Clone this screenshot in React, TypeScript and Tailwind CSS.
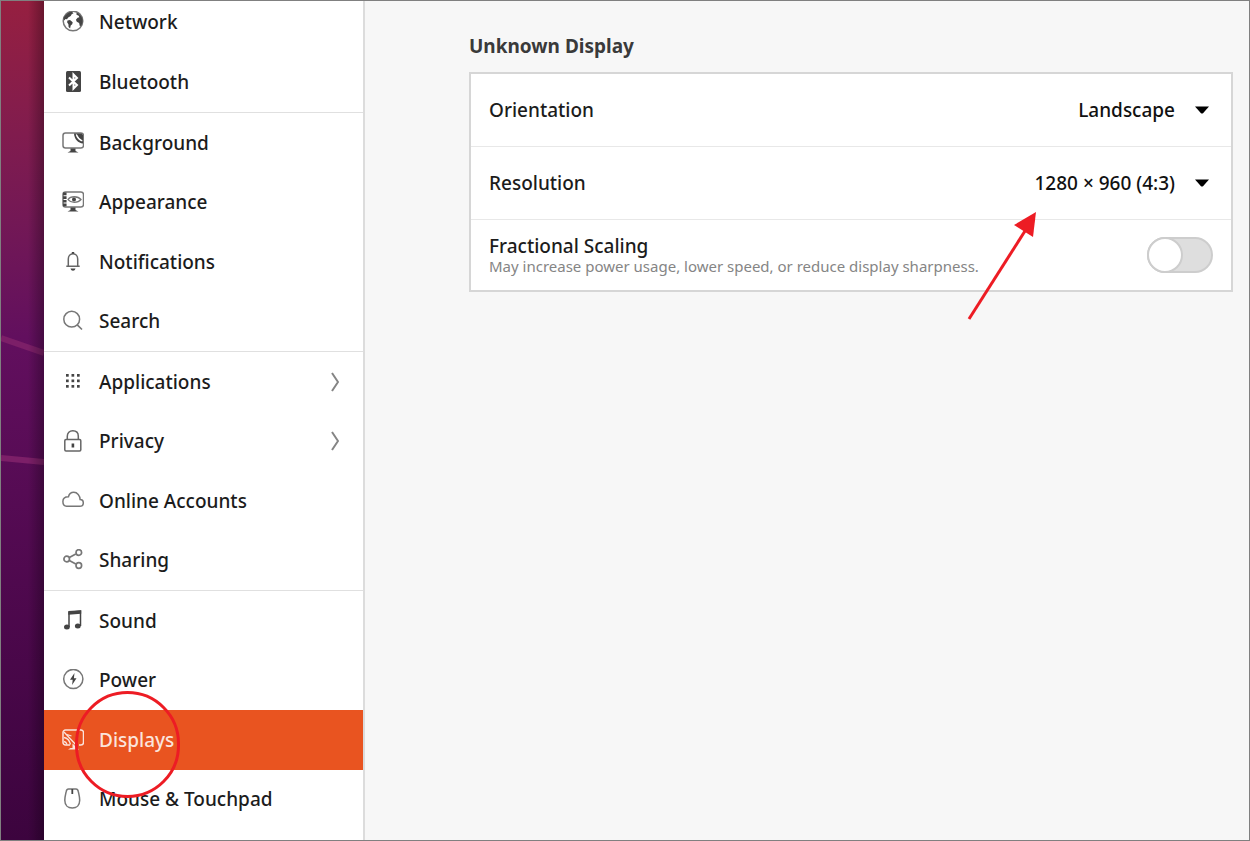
import React, { useState } from "react";

interface NavItem {
  name: string;
  icon: React.ReactNode;
  submenu?: boolean;
}

const Icon = ({ children }: { children: React.ReactNode }) => (
  <svg
    viewBox="0 0 22 22"
    className="size-[22px] shrink-0"
    fill="none"
    stroke="currentColor"
    strokeWidth="1.5"
    aria-hidden="true"
  >
    {children}
  </svg>
);

const groups: NavItem[][] = [
  [
    {
      name: "Network",
      icon: (
        <Icon>
          <circle cx="11" cy="10" r="9.8" strokeWidth="1.5" stroke="#777" />
          <path
            d="M1.500 7.500C3 3.500 6.500 1 10 .8l1.500 1.500-1.800 1-1 1.700-2.500 1.500L5 8.300 3.500 8l-1.300 1.500z"
            fill="currentColor"
            stroke="none"
          />
          <path
            d="M5.500 9.500l2.500-.4 2.700 2.100-.5 2-1.500 1.400-.6 3-1.500-1.500-.2-2.900-1.300-1.900z"
            fill="currentColor"
            stroke="none"
          />
          <path
            d="M14.500 1.500c3 1 5.400 3.700 6.100 7l-.1 3.200-1.200 3-1.500.3-.7-3-2.300-1.200-.9-2 1.700-2.100 1.700-.4-.6-1.600-2.200-.9z"
            fill="currentColor"
            stroke="none"
          />
        </Icon>
      ),
    },
    {
      name: "Bluetooth",
      icon: (
        <Icon>
          <rect x="4" y="0" width="15" height="21" rx="1.500" fill="currentColor" stroke="none" />
          <path d="M7 6.500l8 7.500-3.500 3.500v-14L15 7l-8 7.500" stroke="white" strokeWidth="2" />
        </Icon>
      ),
    },
  ],
  [
    {
      name: "Background",
      icon: (
        <Icon>
          <rect x="1" y="1" width="20.500" height="15" rx="2.500" stroke="#777" />
          <path d="M12 1.500h7.500L21 3v8.500c-5-.5-8.500-4-9-10z" fill="currentColor" stroke="none" />
          <path d="M14.300 2.500c1 3.500 2.500 5.300 6 6.500-1.800-1-4.500-3-6-6.500z" fill="white" stroke="white" strokeWidth="1.200" />
          <path d="M8.500 16.500h5v2.500l3 1.500H5.500l3-1.500z" fill="currentColor" stroke="none" />
        </Icon>
      ),
    },
    {
      name: "Appearance",
      icon: (
        <Icon>
          <rect x="1" y="1" width="20.500" height="15" rx="2.500" stroke="#777" />
          <path d="M2.800 1.500v14.500" strokeWidth="3.500" strokeDasharray="2.700 1" />
          <path d="M6 8.500C8.500 4.800 16 4.800 19 8.500c-3 3.700-10.500 3.700-13 0z" strokeWidth="1.300" stroke="#777" />
          <circle cx="12" cy="8.500" r="2" fill="currentColor" stroke="none" />
          <path d="M8.500 16.500h5v2.500l3 1.500H5.500l3-1.500z" fill="currentColor" stroke="none" />
        </Icon>
      ),
    },
    {
      name: "Notifications",
      icon: (
        <Icon>
          <path d="M6.300 14.500V8c0-3 2-5.300 4.700-5.300s4.700 2.300 4.700 5.300v6.500M4.300 15.300h13.400" stroke="#666" />
          <path d="M9.800 1h2.400v1.800H9.800zM8.500 17.500h5c-.5 1.700-1.300 2.200-2.500 2.200s-2-.5-2.500-2.200z" fill="currentColor" stroke="none" />
        </Icon>
      ),
    },
    {
      name: "Search",
      icon: (
        <Icon>
          <circle cx="9.700" cy="9.200" r="7.900" stroke="#777" />
          <path d="M15 14.700l5 4.800" strokeWidth="1.700" stroke="#777" />
        </Icon>
      ),
    },
  ],
  [
    {
      name: "Applications",
      icon: (
        <Icon>
          {[3, 8.5, 14].map((y) =>
            [4, 9.5, 15].map((x) => (
              <rect key={`${x}-${y}`} x={x} y={y} width="2.700" height="2.700" fill="currentColor" stroke="none" />
            ))
          )}
        </Icon>
      ),
      submenu: true,
    },
    {
      name: "Privacy",
      icon: (
        <Icon>
          <rect x="2.800" y="9.500" width="16" height="11.500" rx="1.200" stroke="#666" />
          <path d="M5.300 9.500V6.200C5.300 3 7.500.8 10.800.8s5.500 2.200 5.500 5.400v3.300" stroke="#666" />
          <rect x="9.600" y="13.500" width="2.600" height="4" fill="currentColor" stroke="none" />
        </Icon>
      ),
      submenu: true,
    },
    {
      name: "Online Accounts",
      icon: (
        <Icon>
          <path
            d="M4.600 16.200h13.200c2.200 0 3.500-1.400 3.500-3.300 0-2-1.500-3.300-3.200-3.300C18 5.500 15.300 2.300 11.800 2.300c-2.700 0-4.700 1.700-5.300 4.400-3 0-5.600 1.600-5.600 4.800 0 2.900 1.500 4.700 3.700 4.700z"
            stroke="#777"
          />
        </Icon>
      ),
    },
    {
      name: "Sharing",
      icon: (
        <Icon>
          <g stroke="#777" strokeWidth="1.700">
            <circle cx="4.700" cy="10" r="2.800" />
            <circle cx="16.800" cy="3.500" r="2.800" />
            <circle cx="16.800" cy="16.500" r="2.800" />
            <path d="M7.300 8.600l6.500-3.500M7.300 11.400l6.500 3.500" />
          </g>
        </Icon>
      ),
    },
  ],
  [
    {
      name: "Sound",
      icon: (
        <Icon>
          <path d="M7 17V2.500L18.500 1v15" strokeWidth="1.500" />
          <path d="M6.300 1L19.200.2v3.600L6.300 4.800z" fill="currentColor" stroke="none" />
          <ellipse cx="4.900" cy="17" rx="2.900" ry="2.500" fill="currentColor" stroke="none" />
          <ellipse cx="15.800" cy="16" rx="2.900" ry="2.500" fill="currentColor" stroke="none" />
        </Icon>
      ),
    },
    {
      name: "Power",
      icon: (
        <Icon>
          <circle cx="11.300" cy="10" r="9.600" stroke="#777" />
          <path d="M12.500 4L8 10.800h2.700l-.6 5.200 4.400-6.800h-2.600z" fill="currentColor" stroke="none" />
        </Icon>
      ),
    },
    {
      name: "Displays",
      icon: (
        <Icon>
          <path d="M8 16H3.500A2.500 2.500 0 0 1 1 13.500v-10A2.500 2.500 0 0 1 3.500 1H19a2.500 2.500 0 0 1 2.500 2.500v10A2.500 2.500 0 0 1 19 16h-2" />
          <path d="M2 3l12.500 13.500M2 8.500c3 .4 5.500 2.700 6.500 7M2 12.500c1.500.2 2.500 1.200 3 3M5 5.500l4.500 1.500" strokeWidth="1.300" />
          <path d="M10.500 14.500l6.500 6H6L8.500 19h2z" fill="currentColor" stroke="none" />
        </Icon>
      ),
    },
    {
      name: "Mouse & Touchpad",
      icon: (
        <Icon>
          <path
            d="M6.500 1h7.500c1.500 0 2 1 2.300 2.500.7 3 1.400 5.500 1.400 8.700 0 4.700-3 7.800-7.400 7.800s-7.500-3.100-7.500-7.800c0-3.200.7-5.700 1.400-8.700C4.500 2 5 1 6.500 1z"
            stroke="#777"
          />
          <path d="M10.300 1v5" strokeWidth="1.800" />
        </Icon>
      ),
    },
  ],
];

const Wallpaper = () => (
  <div className="relative w-[43px] shrink-0 bg-linear-to-b from-[#961f40] via-[#620f5e] via-40% to-[#3c043e]">
    <svg viewBox="0 0 43 839" className="absolute inset-x-0 top-0 w-full" aria-hidden="true">
      <path d="M0 337L43 352M0 457L43 461" stroke="#7c1f68" strokeWidth="6" />
    </svg>
    <div className="absolute inset-y-0 right-0 w-4 bg-linear-to-r from-transparent to-black/30" />
  </div>
);

const Sidebar = () => {
  const [selected, setSelected] = useState("Displays");

  return (
    <nav className="w-[321px] shrink-0 border-r-2 border-[#dcdcdc] bg-white">
      {groups.map((items, index) => (
        <ul
          key={index}
          className={
            index === 0
              ? "flex h-[112px] flex-col justify-end border-b border-[#e0e0e0]"
              : "grid h-[239px] grid-rows-4 border-b border-[#e0e0e0] last:border-white"
          }
        >
          {items.map((item) => (
            <li key={item.name} className={index === 0 ? "relative h-[60px] shrink-0" : "relative"}>
              <a
                href="#"
                onClick={() => setSelected(item.name)}
                className={`flex h-full items-center gap-[15px] pr-6 pl-[18px] ${
                  selected === item.name ? "bg-[#e95420] text-[#fbe4dc]" : "text-[#444]"
                }`}
              >
                {item.icon}
                <span
                  className={`flex-1 text-[19px] font-medium whitespace-nowrap ${
                    selected === item.name ? "" : "text-[#1c1c1c]"
                  }`}
                >
                  {item.name}
                </span>
                {item.submenu && (
                  <svg viewBox="0 0 8 20" className="h-5 w-2" fill="none" stroke="#858585" strokeWidth="2" aria-hidden="true">
                    <path d="M1 1l6 9-6 9" />
                  </svg>
                )}
              </a>
              {/* Red ring around the Displays entry */}
              {item.name === "Displays" && (
                <div className="pointer-events-none absolute -top-[19px] left-[31px] z-10 h-[107px] w-[105px] rounded-full border-3 border-[#ed1c24]" />
              )}
            </li>
          ))}
        </ul>
      ))}
    </nav>
  );
};

const SelectRow = ({ id, label, options }: { id: string; label: string; options: string[] }) => (
  <div className="flex h-[73px] items-center justify-between border-b border-[#e8e8e8] pr-[22px] pl-[18px]">
    <label htmlFor={id}>{label}</label>
    <div className="relative flex items-center">
      <select id={id} className="appearance-none bg-transparent pr-[34px] text-[#111] [field-sizing:content]">
        {options.map((option) => (
          <option key={option}>{option}</option>
        ))}
      </select>
      <svg viewBox="0 0 14 8" className="pointer-events-none absolute right-0 h-2 w-[14px]" aria-hidden="true">
        <path d="M0 .5h14L8 7.200Q7 8 6 7.200z" fill="#000" />
      </svg>
    </div>
  </div>
);

const DisplayPanel = () => {
  const [scaling, setScaling] = useState(false);

  return (
    <main className="min-w-0 flex-1 bg-[#f7f7f7] pt-[31px] pr-4 pl-[104px]">
      <h1 className="text-[19px] leading-7 font-bold text-[#3a3a3a]">Unknown Display</h1>
      <section className="relative mt-3 border-2 border-[#d6d6d6] bg-white text-[19px] font-medium text-[#1c1c1c]">
        <SelectRow id="orientation" label="Orientation" options={["Landscape"]} />
        <SelectRow id="resolution" label="Resolution" options={["1280 × 960 (4:3)"]} />
        <div className="flex h-[70px] items-center justify-between px-[18px]">
          <div>
            <label htmlFor="scaling" className="block leading-[22px]">
              Fractional Scaling
            </label>
            <p id="scaling-hint" className="text-[15px] leading-[18px] font-normal text-[#858585]">
              May increase power usage, lower speed, or reduce display sharpness.
            </p>
          </div>
          <span className="relative h-9 w-[66px] shrink-0">
            <input
              id="scaling"
              type="checkbox"
              role="switch"
              aria-describedby="scaling-hint"
              checked={scaling}
              onChange={() => setScaling(!scaling)}
              className="peer block h-full w-full appearance-none rounded-full border-2 border-[#cdcdcd] bg-[#dedede] checked:bg-[#e95420]"
            />
            <span className="pointer-events-none absolute top-0 left-0 size-9 rounded-full border-2 border-[#cdcdcd] bg-white peer-checked:left-[30px]" />
          </span>
        </div>
        {/* Arrow pointing at the resolution */}
        <svg
          viewBox="0 0 70 110"
          className="pointer-events-none absolute top-[137px] right-[194px] h-[110px] w-[70px]"
          aria-hidden="true"
        >
          <path d="M2 108L58 20" stroke="#ed1c24" strokeWidth="3" />
          <path d="M69 1L47 14l19 12z" fill="#ed1c24" />
        </svg>
      </section>
    </main>
  );
};

const App = () => {
  return (
    <div className="flex h-screen overflow-hidden border border-[#808080] font-['Noto_Sans',sans-serif]">
      <Wallpaper />
      <Sidebar />
      <DisplayPanel />
    </div>
  );
};

export default App;
